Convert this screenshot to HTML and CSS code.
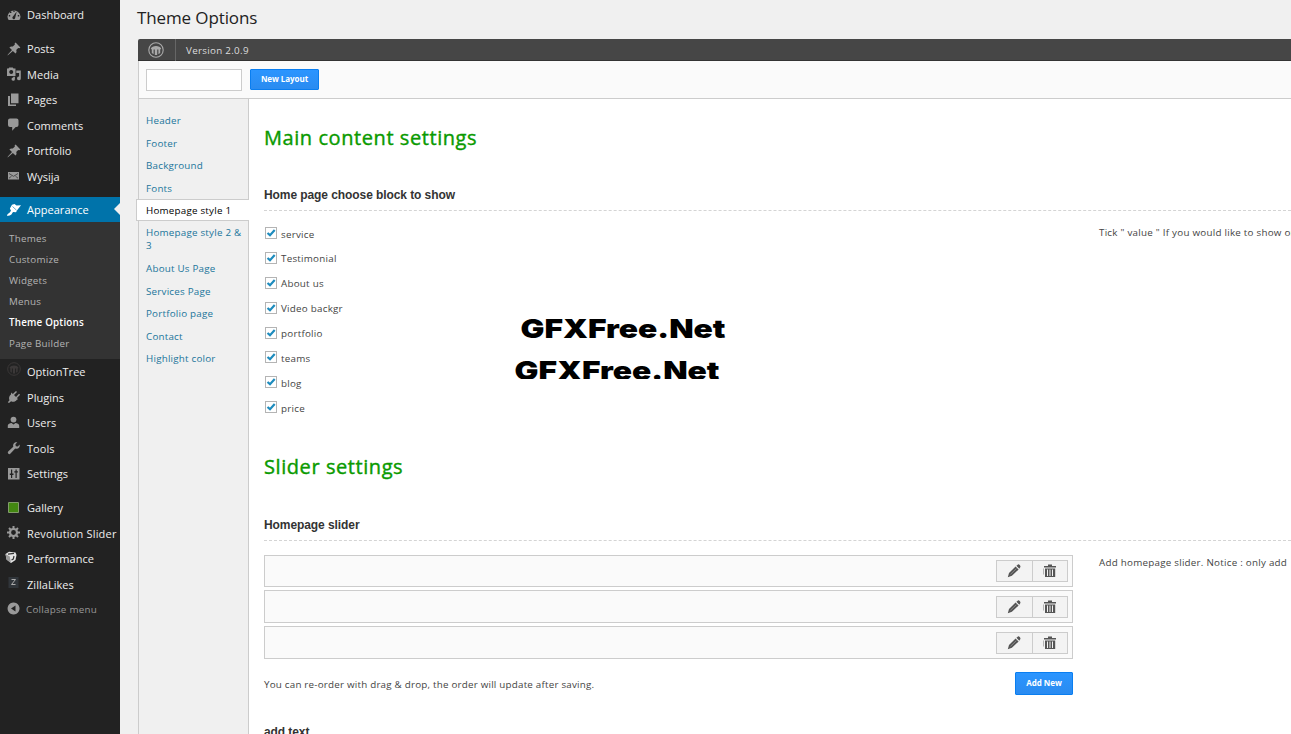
FILE: index.html
```html
<!DOCTYPE html>
<html lang="en">
<head>
<meta charset="utf-8">
<title>Theme Options</title>
<link rel="stylesheet" href="styles.css">
</head>
<body>
<svg class="sprite" aria-hidden="true">
  <symbol id="dash" viewBox="0 0 14 14"><path fill-rule="evenodd" d="M1.6 12A6.3 6.3 0 1 1 12.4 12ZM6.2 2.2v1.6h1.6V2.2ZM3 3.7v1.4h1.4V3.7ZM1.8 7v1.4h1.4V7ZM10.8 7v1.4h1.4V7ZM9.7 3.5 6 8.6a1.4 1.4 0 1 0 2.2 1.2Z"/></symbol>
  <symbol id="pin" viewBox="0 0 14 14"><path d="M8.6.6l4.800 4.800-1.100.8-1.100-.3-2 2.100c.6 1.300.400 2.600-.700 3.500L5.900 9 1.200 12.900.5 13.400l.4-.9 4.100-4.500-2.600-2.600c.9-1 2.100-1.200 3.400-.8l2.100-2-.3-1z"/></symbol>
  <symbol id="media" viewBox="0 0 14 14"><path fill-rule="evenodd" d="M0 1.500h1.500l.7-1h3.600l.7 1H8.500V9H0ZM4.200 3a2 2 0 1 0 .1 0ZM9.300 3.500h4.500v7.900a1.900 1.900 0 1 1-1.700-1.900V6H9.300ZM7.900 9.800v2.400a1.700 1.700 0 1 1-1.600-1.800V9.800Z"/></symbol>
  <symbol id="pages" viewBox="0 0 14 14"><path d="M4 .5h7.500v9.800H4zM1 3h2v8.500h6V13H1z"/></symbol>
  <symbol id="comment" viewBox="0 0 14 14"><path d="M3 .5h6.500a2 2 0 0 1 2 2V7a2 2 0 0 1-2 2H8.700L5.200 12.800V9H3a2 2 0 0 1-2-2V2.500a2 2 0 0 1 2-2z"/></symbol>
  <symbol id="mail" viewBox="0 0 14 14"><path d="M1 3h11v7.500H1z"/><path d="M2 4.500l4.500 2.800L11 4.500M2 9.200l2.500-2M11 9.200l-2.500-2" fill="none" stroke="#444" stroke-width=".9"/></symbol>
  <symbol id="brush" viewBox="0 0 14 14"><path d="M5 1.800 7.500 1l2 1.600 4.500-.4-3.700 4.700L9 9.300l-2.800-.4c-.8.700-1.200 2-2.200 2.900-1 .8-2.500 1.100-4.200.8.300-1.300 1.600-2 2.700-2.900L4 7.700 2.900 5.500z"/><path d="M5.500 3.500l4 3.700" stroke="#0073aa" stroke-width=".6"/></symbol>
  <symbol id="tree" viewBox="0 0 16 16"><circle cx="8" cy="8" r="7.200" fill="none" stroke="currentColor" stroke-width="1.100"/><path d="M2.800 6.800C4 3 12 3 13.200 6.800L12.200 7.500v3.500L10.400 12.300V7.500H9.200V13H6.800V7.500H5.600v4.800L3.800 11V7.500z"/></symbol>
  <symbol id="plug" viewBox="0 0 14 14"><path d="M4.300 2.500l1.500 1.400L9 .9l1 1-3 3.100 2 2 3-3.200 1.100 1-3.100 3.200 1 1.200-1.200.6c-1.400 2-3.700 2.500-5.700 1.500L2 13 .8 12.200l1.700-2C1.600 8.300 2 6 3.900 4.500z"/></symbol>
  <symbol id="user" viewBox="0 0 14 14"><circle cx="6.500" cy="3.600" r="2.900"/><path d="M.8 12V9.400C.8 8 3 7.300 4.500 7l2 1.600 2-1.600c1.500.3 3.700 1 3.700 2.400V12z"/></symbol>
  <symbol id="wrench" viewBox="0 0 14 14"><path d="M12.700 3.500c.6 3-1.600 4.900-4.500 4L3.500 12.600a1.500 1.500 0 0 1-2.300-2L6.300 5.800C5.500 3 7.500.9 10.300 1.300L8.400 3.200l.4 2 2 .3z"/></symbol>
  <symbol id="sliders" viewBox="0 0 14 14"><path fill-rule="evenodd" d="M1 1h11.500v11.500H1ZM4 2.500v4H2.800v1.400H4v3h1.200V7.900h1.300V6.500H5.200v-4ZM8.500 2.500v1.700H7.300v1.400h1.200v5.300h1.200V5.600h1.200V4.200H9.700V2.500Z"/></symbol>
  <symbol id="gallery" viewBox="0 0 14 14"><path d="M1.500 1.500h10v10h-10z" fill="#438711" stroke="#829b6b"/></symbol>
  <symbol id="gear" viewBox="0 0 14 14"><circle cx="6.500" cy="6.500" r="3.500" fill="none" stroke="currentColor" stroke-width="2.200"/><path d="M6.500 0v3M6.500 10v3M0 6.500h3M10 6.500h3M2 2l2 2M9 9l2 2M11 2 9 4M4 9l-2 2" stroke="currentColor" stroke-width="2"/></symbol>
  <symbol id="cube" viewBox="0 0 14 14"><path d="M.5 3 4 .8 10.500 1.500 11.500 4 10.500 9 6 12 1.500 8.500z" fill="#e4e4e4"/><path d="M.5 3l4.300 2.500L6 12 1.500 8.500z" fill="#999"/><path d="M3 3.200l6-.9M6.500 9l1.800-1 .7-3" fill="none" stroke="#333" stroke-width="1.200"/></symbol>
  <symbol id="zilla" viewBox="0 0 14 14"><path d="M1.500 1h10v11h-10z" fill="#30353a"/><path d="M4.500 3.500h4l-4 5h4" fill="none" stroke="#aaa"/></symbol>
  <symbol id="collapse" viewBox="0 0 14 14"><path fill-rule="evenodd" d="M6.500.5a6 6 0 1 0 .1 0ZM8.500 3.400v6.200L4 6.500Z"/></symbol>
  <symbol id="pencil" viewBox="0 0 14 14"><path d="M8.600 2.500l3 3-6.700 6.300L.800 13.200 2 9zM9.400 1.800 11 .4c1-.4 2.800 1.300 2.400 2.500L12.300 4.700z"/><path d="M3.500 10.300l5.800-5.600" stroke="#aaa" stroke-width=".6"/></symbol>
  <symbol id="trash" viewBox="0 0 14 14"><path d="M1 2h4V.5h4V2h4v1.600H1z"/><path fill-rule="evenodd" d="M2 4.500h10.200V13H2ZM4 5.500V12h1V5.500ZM6.500 5.500V12h1V5.500ZM9 5.500V12h1V5.500Z"/><path d="M.5 4.500v6" stroke="#999" stroke-width=".7"/></symbol>
  <symbol id="tick" viewBox="0 0 12 12"><path d="M2.500 6 5 8.200l4.700-5.100" fill="none" stroke="#1e8cbe" stroke-width="2.200"/></symbol>
</svg>
<div class="app">
  <nav class="menu">
    <a class="item"><svg><use href="#dash"/></svg><span>Dashboard</span></a>
    <div class="gap"></div>
    <a class="item"><svg><use href="#pin"/></svg><span>Posts</span></a>
    <a class="item"><svg><use href="#media"/></svg><span>Media</span></a>
    <a class="item"><svg><use href="#pages"/></svg><span>Pages</span></a>
    <a class="item"><svg><use href="#comment"/></svg><span>Comments</span></a>
    <a class="item"><svg><use href="#pin"/></svg><span>Portfolio</span></a>
    <a class="item"><svg><use href="#mail"/></svg><span>Wysija</span></a>
    <div class="gap"></div>
    <a class="item current"><svg><use href="#brush"/></svg><span>Appearance</span></a>
    <div class="submenu">
      <a>Themes</a><a>Customize</a><a>Widgets</a><a>Menus</a><a class="on">Theme Options</a><a>Page Builder</a>
    </div>
    <a class="item"><svg class="dim"><use href="#tree"/></svg><span>OptionTree</span></a>
    <a class="item"><svg><use href="#plug"/></svg><span>Plugins</span></a>
    <a class="item"><svg><use href="#user"/></svg><span>Users</span></a>
    <a class="item"><svg><use href="#wrench"/></svg><span>Tools</span></a>
    <a class="item"><svg><use href="#sliders"/></svg><span>Settings</span></a>
    <div class="gap"></div>
    <a class="item"><svg><use href="#gallery"/></svg><span>Gallery</span></a>
    <a class="item wide"><svg><use href="#gear"/></svg><span>Revolution Slider</span></a>
    <a class="item"><svg class="cube"><use href="#cube"/></svg><span>Performance</span></a>
    <a class="item"><svg class="zilla"><use href="#zilla"/></svg><span>ZillaLikes</span></a>
    <a class="item collapse"><svg><use href="#collapse"/></svg><span>Collapse menu</span></a>
  </nav>
  <main class="main">
    <h1>Theme Options</h1>
    <div class="panel">
      <div class="version"><div class="logo"><svg><use href="#tree"/></svg></div><span>Version 2.0.9</span></div>
      <div class="toolbar"><input type="text" aria-label="Layout name"><button class="btn">New Layout</button></div>
      <div class="body">
        <div class="tabs">
          <a>Header</a><a>Footer</a><a>Background</a><a>Fonts</a><a class="active">Homepage style 1</a><a class="two">Homepage style 2 &amp; 3</a><a>About Us Page</a><a>Services Page</a><a>Portfolio page</a><a>Contact</a><a>Highlight color</a>
        </div>
        <div class="content">
          <h2>Main content settings</h2>
          <h3>Home page choose block to show</h3>
          <div class="setting blocks">
            <div class="checks">
              <label><i><svg><use href="#tick"/></svg></i>service</label>
              <label><i><svg><use href="#tick"/></svg></i>Testimonial</label>
              <label><i><svg><use href="#tick"/></svg></i>About us</label>
              <label><i><svg><use href="#tick"/></svg></i>Video backgr</label>
              <label><i><svg><use href="#tick"/></svg></i>portfolio</label>
              <label><i><svg><use href="#tick"/></svg></i>teams</label>
              <label><i><svg><use href="#tick"/></svg></i>blog</label>
              <label><i><svg><use href="#tick"/></svg></i>price</label>
            </div>
            <p class="desc">Tick " value " If you would like to show on</p>
            <svg class="mark" viewBox="0 0 212 64"><text x="5.500" y="23" textLength="205" lengthAdjust="spacingAndGlyphs">GFXFree.Net</text><text x="-.5" y="65" textLength="205" lengthAdjust="spacingAndGlyphs">GFXFree.Net</text></svg>
          </div>
          <h2 class="second">Slider settings</h2>
          <h3>Homepage slider</h3>
          <div class="setting">
            <div class="slides">
              <div class="slide first"><span class="acts"><b><svg><use href="#pencil"/></svg></b><b><svg><use href="#trash"/></svg></b></span></div>
              <div class="slide"><span class="acts"><b><svg><use href="#pencil"/></svg></b><b><svg><use href="#trash"/></svg></b></span></div>
              <div class="slide"><span class="acts"><b><svg><use href="#pencil"/></svg></b><b><svg><use href="#trash"/></svg></b></span></div>
              <div class="foot"><span>You can re-order with drag &amp; drop, the order will update after saving.</span><button class="btn add">Add New</button></div>
            </div>
            <p class="desc slider-desc">Add homepage slider. Notice : only add</p>
          </div>
          <h3 class="last">add text</h3>
        </div>
      </div>
    </div>
  </main>
</div>
</body>
</html>
```
FILE: styles.css
```css
* { box-sizing: border-box; }
body { margin: 0; width: 1291px; height: 734px; overflow: hidden; background: #f0f0f0; color: #444; font: 9.8px/13px "Open Sans", sans-serif; letter-spacing: .25px; }
h1, h2, h3, p { margin: 0; }
.sprite { position: absolute; width: 0; height: 0; }
svg { fill: currentColor; display: block; }
.app { display: flex; height: 734px; }

.menu { width: 120px; flex: none; background: #222; padding-top: 2px; }
.item { display: flex; align-items: center; height: 25.5px; padding-left: 7px; color: #999; }
.item svg { width: 14px; height: 14px; margin-right: 6px; flex: none; }
.item span { color: #eee; font-size: 11px; white-space: nowrap; letter-spacing: .03px; }
.item.wide span { letter-spacing: .18px; }
.item .dim { color: #3b3838; margin-top: -5px; }
.item .cube { margin-left: -2px; margin-right: 8px; margin-top: -2px; }
.item .zilla { margin-top: -3px; }
.gap { height: 8.25px; }
.current { position: relative; background: #0073aa; color: #fff; height: 25px; }
.current span { color: #fff; }
.current::after { content: ""; position: absolute; right: 0; top: 6px; border: 6px solid transparent; border-left: 0; border-right-color: #f0f0f0; }
.submenu { background: #333; height: 137px; padding: 6px 0 0 9px; color: #b4b4b4; }
.submenu a { display: block; height: 21px; line-height: 22px; }
.submenu .on { color: #fff; font-weight: 600; letter-spacing: .2px; }
.collapse { height: 24px; padding-top: 1px; }
.item.collapse span { color: #999; font-size: 9.8px; letter-spacing: .25px; margin-left: -1px; padding-top: 1px; }

.main { flex: 1; min-width: 0; overflow: hidden; }
h1 { height: 39px; padding: 6px 0 0 17px; font-size: 17px; line-height: 24px; font-weight: 400; letter-spacing: -.12px; color: #222; }
.panel { margin-left: 18px; }
.version { display: flex; align-items: center; height: 22px; background: #464646; border-bottom: 1px solid #333; border-radius: 2px 0 0; color: #ddd; letter-spacing: .3px; }
.version span { padding-top: 2px; }
.logo { width: 38px; height: 22px; padding: 3px 0 0 10px; border-right: 1px solid #666; margin-right: 10px; color: #aaa; }
.logo svg { width: 16px; height: 16px; }
.toolbar { display: flex; height: 38px; padding: 8px 7px; gap: 8px; background: #fafafa; border: solid #ccc; border-width: 0 0 1px 1px; }
.toolbar input { width: 96px; height: 22px; border: 1px solid #ccc; background: #fff; padding: 0; }
.btn { width: 69px; height: 21px; padding: 0 0 1px; border: 1px solid #0a7ef0; border-radius: 1px; background: linear-gradient(#2b95ff, #2a8bf0); color: #fff; font: 700 8px/18px "Open Sans", sans-serif; letter-spacing: -.05px; }
.body { display: flex; height: 635px; }
.tabs { width: 111px; flex: none; padding-top: 10px; background: #f0f0f0; border: solid #ccc; border-width: 0 1px; color: #21759b; letter-spacing: .22px; }
.tabs a { display: block; height: 22.5px; line-height: 13px; padding: 5px 0 0 7px; }
.tabs .active { height: 22px; padding: 4px 0 0 9px; margin: 0 -1px 0 -3px; background: #fff; border: 1px solid #ccc; border-right: 0; color: #000; }
.tabs .two { height: 36px; }
.content { flex: 1; min-width: 0; padding-left: 15px; background: #fff; }
h2 { height: 78px; padding-top: 25px; font-size: 20px; line-height: 28px; font-weight: 400; letter-spacing: .57px; color: #0a9a00; -webkit-text-stroke: .4px #0a9a00; }
.second { height: 79px; }
h3 { height: 34px; padding-top: 10px; border-bottom: 1px dashed #d4d4d4; font: 700 12px/16px "Liberation Sans", sans-serif; letter-spacing: -.08px; color: #333; }
.setting { display: flex; position: relative; }
.blocks { height: 217px; }
.checks { width: 809px; padding-top: 10.6px; flex: none; }
.checks label { display: flex; align-items: center; height: 24.9px; }
.checks i { width: 12px; height: 12px; margin: -2px 4px 0 1px; border: 1px solid #b4b4b4; }
.checks i svg { width: 12px; height: 12px; margin: -1px; }
.desc { flex: 1; min-width: 0; margin-left: 26px; padding-top: 15px; white-space: nowrap; }
.mark { position: absolute; left: 251px; top: 104px; width: 212px; height: 64px; overflow: hidden; fill: #000; font: 900 26px Inter, sans-serif; letter-spacing: 0; }
.slides { width: 809px; padding-top: 14px; flex: none; }
.slide { height: 33px; margin-bottom: 3px; padding: 5px 4px 0; border: 1px solid #ccc; background: #fafafa; display: flex; justify-content: flex-end; }
.slide.first { height: 32px; padding-top: 4px; }
.acts { display: flex; width: 72px; height: 22px; border: 1px solid #ccc; background: #f3f3f3; }
.acts b { flex: 1; display: flex; align-items: center; justify-content: center; color: #555; }
.acts b + b { border-left: 1px solid #ccc; }
.acts svg { width: 14px; height: 14px; }
.foot { display: flex; justify-content: space-between; align-items: center; margin-top: 13px; height: 23px; letter-spacing: .22px; }
.foot span { padding-top: 1px; }
.add { width: 58px; height: 23px; }
.last { border: 0; margin-top: 19px; }
```
